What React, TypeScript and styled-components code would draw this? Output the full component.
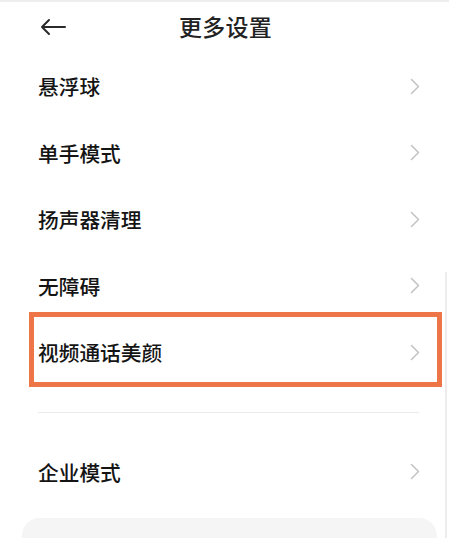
import React from 'react';
import styled, { createGlobalStyle } from 'styled-components';

const GlobalStyle = createGlobalStyle`
  html, body {
    margin: 0;
    padding: 0;
    background: #ffffff;
  }
  body {
    font-family: "Noto Sans CJK SC", "Noto Sans", sans-serif;
  }
`;

type Item = { label: string; highlight?: boolean };

const mainItems: Item[] = [
  { label: '悬浮球' },
  { label: '单手模式' },
  { label: '扬声器清理' },
  { label: '无障碍' },
  { label: '视频通话美颜', highlight: true },
];

const Chevron: React.FC = () => (
  <svg width="10" height="17" viewBox="0 0 10 17" fill="none">
    <path
      d="M1.5 1.5 L8.5 8.5 L1.5 15.5"
      stroke="#c2c2c2"
      strokeWidth="1.5"
      strokeLinecap="round"
      strokeLinejoin="round"
    />
  </svg>
);

const BackArrow: React.FC = () => (
  <svg width="26" height="18" viewBox="0 0 26 18" fill="none">
    <path
      d="M25 9 H2 M9 2 L2 9 L9 16"
      stroke="#2a2a2a"
      strokeWidth="2"
      strokeLinecap="round"
      strokeLinejoin="round"
    />
  </svg>
);

const App: React.FC = () => {
  return (
    <S.Page>
      <GlobalStyle />
      <S.Header>
        <S.BackBtn>
          <BackArrow />
        </S.BackBtn>
        <S.Title>更多设置</S.Title>
      </S.Header>

      <S.List>
        {mainItems.map((item) => (
          <S.Row key={item.label}>
            <S.Label>{item.label}</S.Label>
            <Chevron />
            {item.highlight ? <S.Highlight /> : null}
          </S.Row>
        ))}
      </S.List>

      <S.Divider />

      <S.List>
        <S.Row>
          <S.Label>企业模式</S.Label>
          <Chevron />
        </S.Row>
      </S.List>

      <S.Card />
      <S.ScrollBar />
    </S.Page>
  );
};

export default App;

const S = {
  Page: styled.div`
    position: relative;
    width: 449px;
    height: 538px;
    overflow: hidden;
    background: #ffffff;
    border-top: 2px solid #eeeeee;
    box-sizing: border-box;
  `,

  Header: styled.div`
    position: relative;
    display: flex;
    align-items: center;
    justify-content: center;
    height: 51px;
    padding-bottom: 4px;
    box-sizing: border-box;
  `,

  BackBtn: styled.div`
    position: absolute;
    left: 40px;
    top: 16px;
    display: flex;
  `,

  Title: styled.div`
    font-size: 23px;
    font-weight: 500;
    color: #222222;
    letter-spacing: 0.3px;
    margin-left: 2px;
  `,

  List: styled.div`
    display: flex;
    flex-direction: column;
  `,

  Row: styled.div`
    position: relative;
    display: flex;
    align-items: center;
    justify-content: space-between;
    height: 66.5px;
    padding: 0 29px 0 38px;
  `,

  Label: styled.div`
    font-size: 20.7px;
    font-weight: 500;
    color: #141414;
  `,

  Highlight: styled.div`
    position: absolute;
    left: 29px;
    right: 7px;
    top: -7px;
    bottom: -1.5px;
    border: 5.5px solid #ee7548;
    pointer-events: none;
  `,

  Divider: styled.div`
    height: 1px;
    margin: 26px 30px 26px 38px;
    background: #eaeaea;
  `,

  Card: styled.div`
    margin: 13px 12px 0 22px;
    height: 80px;
    border-radius: 18px;
    background: #f5f5f5;
  `,

  ScrollBar: styled.div`
    position: absolute;
    right: 2px;
    top: 270px;
    bottom: 0;
    width: 2px;
    background: #ececec;
  `,
};
